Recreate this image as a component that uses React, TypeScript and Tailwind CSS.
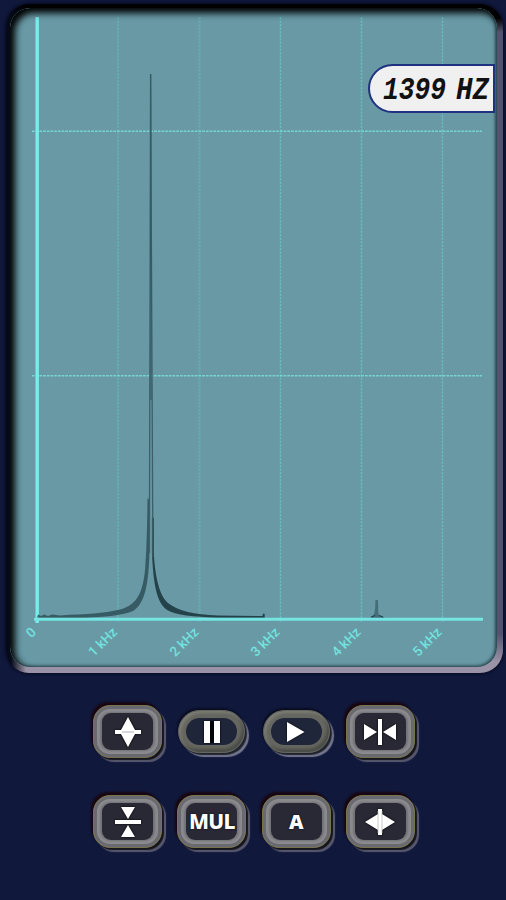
import React from "react";
import clsx from "clsx";

const ticks = [
  { x: 37, label: "0" },
  { x: 118, label: "1 kHz" },
  { x: 199.5, label: "2 kHz" },
  { x: 280.5, label: "3 kHz" },
  { x: 361.5, label: "4 kHz" },
  { x: 442.5, label: "5 kHz" },
];

const SpectrumChart: React.FC = () => (
  <svg viewBox="10 8 487 659" className="block h-full w-full">
    {/* Grid */}
    {ticks.slice(1).map((tick) => (
      <line
        key={tick.label}
        x1={tick.x}
        x2={tick.x}
        y1={17}
        y2={622}
        stroke="#67c5c5"
        strokeWidth={tick.x < 200 ? 2.2 : 1.5}
        strokeOpacity={tick.x < 200 ? 0.4 : 0.75}
        strokeDasharray="2.5 1"
      />
    ))}
    {[131.2, 375.7].map((y) => (
      <line
        key={y}
        x1={32}
        x2={482}
        y1={y}
        y2={y}
        stroke="#76d6d3"
        strokeWidth={1.5}
        strokeDasharray="2.7 1"
      />
    ))}

    {/* Axes */}
    <path d="M37.2 17V623" stroke="#78eeea" strokeWidth="3.4" />
    <path d="M34 619.3H483" stroke="#75e5e2" strokeWidth="3" />

    {/* Main peak */}
    <path
      d="M37 617.5L38 614.5L41 616L44 614.5L48 616L52 614.5L60 615.5L70 614.8C94 614 111 612 122 609C137 604 143 593 145.2 568C146.7 547 147.2 525 147.5 498L149.3 500L149.5 553C148.5 584 145 604 133 611C121 616 103 617 85 617.5Z"
      fill="#2f5058"
      fillOpacity=".85"
    />
    <path
      d="M151.9 517L153.8 518L154 557C156 583 161 597 168 603C178 611 194 614.5 218 615.5L262.5 616L263 613.5L264.7 614V617.5H218C193 617 176 615 167 610C156 602 153.5 583 151.9 553Z"
      fill="#1c3940"
      fillOpacity=".9"
    />
    <path d="M149.4 553L150.6 74L152.9 557" fill="none" stroke="#3b6069" strokeWidth="1.3" />
    <path d="M150.2 74H151.4L151.8 400H150Z" fill="#36565f" fillOpacity=".6" />

    {/* Harmonic */}
    <path d="M371 617.5C374 616 375.2 614 375.4 600L378 600L378.3 613C379 616 381 616 385 617.5Z" fill="#456f78" />
    <path d="M371 617L375 615.5M379 615.5L383 617" stroke="#234249" strokeWidth="1.2" />

    {/* Labels */}
    {ticks.map((tick) => (
      <text
        key={tick.label}
        transform={`translate(${tick.x} 633) rotate(-45)`}
        textAnchor="end"
        className="fill-[#72e3df] font-[Roboto,sans-serif] text-[13.5px] font-medium"
      >
        {tick.label}
      </text>
    ))}
  </svg>
);

const FrequencyBadge: React.FC = () => (
  <div className="absolute top-[60px] right-2 flex h-[49px] w-[127px] items-center rounded-l-full border-2 border-[#1e3280] bg-[#f0f0f0] pl-[13px]">
    <svg
      viewBox="0 0 110 40"
      className="h-10 w-[110px] fill-[#111] font-['Liberation_Mono',monospace] text-[32px] font-bold italic"
    >
      <text x="0" y="30" textLength="63" lengthAdjust="spacingAndGlyphs">
        1399
      </text>
      <text x="73" y="30" textLength="33" lengthAdjust="spacingAndGlyphs">
        HZ
      </text>
    </svg>
  </div>
);

type KeyProps = {
  label: string;
  round?: boolean;
  children: React.ReactNode;
};

const PanelKey: React.FC<KeyProps> = ({ label, round = false, children }) => (
  <button
    aria-label={label}
    className={clsx(
      "flex items-center justify-center",
      round
        ? "mx-px h-[43px] w-[67px] rounded-full border border-[#65665f] bg-[#65665f] shadow-[inset_2px_2px_3px_#7c7d75,inset_-2px_-3px_3px_#4a4c47,-1px_-2px_2px_#090d20,2px_2px_1px_#20242e,4px_4px_1px_#777990]"
        : "h-[53px] w-[69px] rounded-[17px] border border-[#77734e] bg-[#727177] shadow-[inset_0_0_0_3px_#696970,inset_0_0_2px_6px_#8b8a8e,-2px_-3px_2px_#180711,2px_2px_1px_#15151d,4px_4px_1px_#5a5b70]",
    )}
  >
    <span
      className={clsx(
        "flex items-center justify-center text-white",
        round
          ? "h-[27px] w-[51px] rounded-full bg-[#20263a]"
          : "h-[37px] w-[51px] rounded-[9px] bg-[#292935]",
      )}
    >
      {children}
    </span>
  </button>
);

const Glyph: React.FC<{ children: React.ReactNode }> = ({ children }) => (
  <svg
    viewBox="0 0 32 32"
    className="h-8 w-8 fill-white drop-shadow-[0_0_1px_black]"
  >
    {children}
  </svg>
);

export default function App() {
  return (
    <main className="flex h-[900px] w-[506px] flex-col items-center bg-[#10183c] pt-1">
      {/* Screen */}
      <section className="relative ml-[3px] h-[669px] w-[497px] shrink-0 rounded-[23px] bg-[linear-gradient(to_right,#050a18_5px,transparent_20px),linear-gradient(to_bottom,#000_14px,#53536f_28px,#53536f_630px,#9a92a6_658px)] pt-1 pr-1.5 pb-1.5 pl-1 shadow-[0_0_3px_1px_#080b20]">
        <div className="relative h-full overflow-hidden rounded-[20px] bg-[radial-gradient(circle_at_60%_60%,#6899a5_98%,#101a20)]">
          <SpectrumChart />
          <div className="pointer-events-none absolute inset-0 rounded-[20px] shadow-[inset_4px_4px_7px_1px_#000,inset_-2px_-1px_3px_#34535d]" />
        </div>
        <FrequencyBadge />
      </section>

      {/* Keys */}
      <div className="mt-8 ml-0.5 grid grid-cols-4 gap-x-[15.3px] gap-y-[37px]">
        <PanelKey label="Expand vertical">
          <Glyph>
            <path d="M16 1L23 14H9ZM9 18H23L16 31Z" />
            <path d="M3 14H29V18H3Z" />
            <path d="M10 16H22" stroke="#ccc" strokeWidth="1.5" />
          </Glyph>
        </PanelKey>
        <div className="flex items-center">
          <PanelKey label="Pause" round>
            <Glyph>
              <path d="M8 5H14V27H8ZM18 5H24V27H18Z" />
              <path d="M14.5 5H17.5V27H14.5Z" fill="#050508" />
            </Glyph>
          </PanelKey>
        </div>
        <div className="flex items-center">
          <PanelKey label="Play" round>
            <Glyph>
              <path d="M7 6L24.5 16L7 26Z" />
            </Glyph>
          </PanelKey>
        </div>
        <PanelKey label="Compress horizontal">
          <Glyph>
            <path d="M14 3H18V29H14ZM0 8L13 16L0 24ZM32 8L19 16L32 24Z" />
          </Glyph>
        </PanelKey>
        <PanelKey label="Compress vertical">
          <Glyph>
            <path d="M9 1H23L16 13ZM3 14H29V18H3ZM16 19L23 31H9Z" />
          </Glyph>
        </PanelKey>
        <PanelKey label="Multiple">
          <span className="font-['Noto_Sans',sans-serif] text-[21px] leading-none font-extrabold tracking-[-0.8px] [text-shadow:0_0_2px_black]">
            MUL
          </span>
        </PanelKey>
        <PanelKey label="Auto">
          <span className="font-['Noto_Sans',sans-serif] text-[20px] leading-none font-black [text-shadow:0_0_2px_black]">
            A
          </span>
        </PanelKey>
        <PanelKey label="Expand horizontal">
          <Glyph>
            <path d="M1 16L14 8V24ZM31 16L18 8V24ZM14 3H18V29H14Z" />
            <path d="M14 5V27M18 5V27" stroke="#bbb" strokeWidth=".8" />
          </Glyph>
        </PanelKey>
      </div>
    </main>
  );
}
